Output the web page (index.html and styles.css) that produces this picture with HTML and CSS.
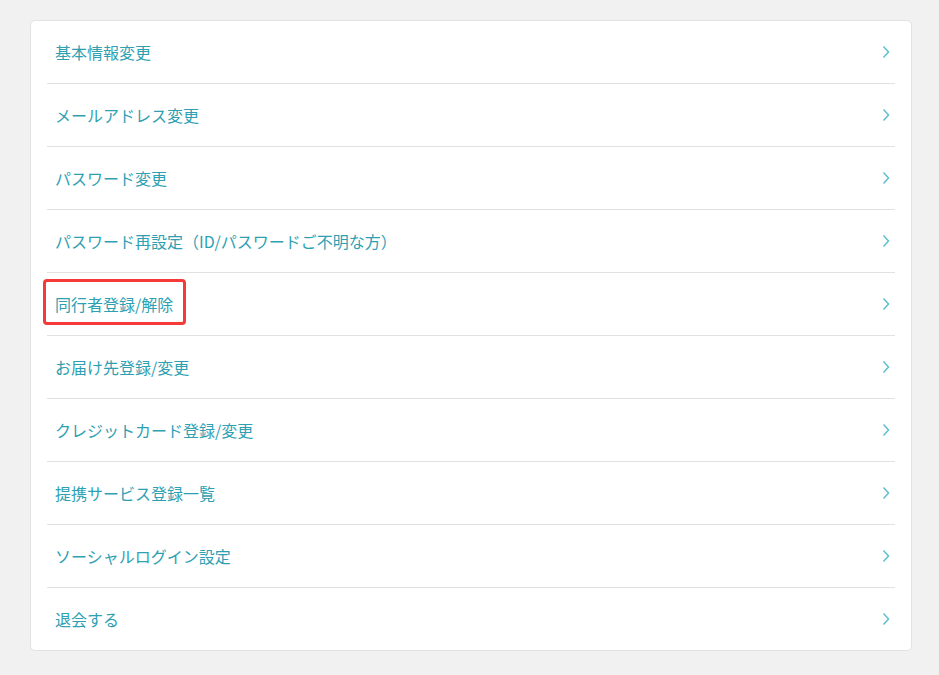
FILE: index.html
```html
<!DOCTYPE html>
<html lang="ja">
<head>
<meta charset="utf-8">
<title>設定</title>
<link rel="stylesheet" href="styles.css">
</head>
<body>
<div class="page">
  <ul class="menu">
    <li class="menu-item"><a class="menu-link" href="#"><span class="label">基本情報変更</span><svg class="chev" viewBox="0 0 8 14" width="8" height="14"><path d="M1.5 1.5 L6.5 7 L1.5 12.5"/></svg></a></li>
    <li class="menu-item"><a class="menu-link" href="#"><span class="label">メールアドレス変更</span><svg class="chev" viewBox="0 0 8 14" width="8" height="14"><path d="M1.5 1.5 L6.5 7 L1.5 12.5"/></svg></a></li>
    <li class="menu-item"><a class="menu-link" href="#"><span class="label">パスワード変更</span><svg class="chev" viewBox="0 0 8 14" width="8" height="14"><path d="M1.5 1.5 L6.5 7 L1.5 12.5"/></svg></a></li>
    <li class="menu-item"><a class="menu-link" href="#"><span class="label">パスワード再設定（ID/パスワードご不明な方）</span><svg class="chev" viewBox="0 0 8 14" width="8" height="14"><path d="M1.5 1.5 L6.5 7 L1.5 12.5"/></svg></a></li>
    <li class="menu-item"><a class="menu-link" href="#"><span class="label highlight">同行者登録/解除</span><svg class="chev" viewBox="0 0 8 14" width="8" height="14"><path d="M1.5 1.5 L6.5 7 L1.5 12.5"/></svg></a></li>
    <li class="menu-item"><a class="menu-link" href="#"><span class="label">お届け先登録/変更</span><svg class="chev" viewBox="0 0 8 14" width="8" height="14"><path d="M1.5 1.5 L6.5 7 L1.5 12.5"/></svg></a></li>
    <li class="menu-item"><a class="menu-link" href="#"><span class="label">クレジットカード登録/変更</span><svg class="chev" viewBox="0 0 8 14" width="8" height="14"><path d="M1.5 1.5 L6.5 7 L1.5 12.5"/></svg></a></li>
    <li class="menu-item"><a class="menu-link" href="#"><span class="label">提携サービス登録一覧</span><svg class="chev" viewBox="0 0 8 14" width="8" height="14"><path d="M1.5 1.5 L6.5 7 L1.5 12.5"/></svg></a></li>
    <li class="menu-item"><a class="menu-link" href="#"><span class="label">ソーシャルログイン設定</span><svg class="chev" viewBox="0 0 8 14" width="8" height="14"><path d="M1.5 1.5 L6.5 7 L1.5 12.5"/></svg></a></li>
    <li class="menu-item"><a class="menu-link" href="#"><span class="label">退会する</span><svg class="chev" viewBox="0 0 8 14" width="8" height="14"><path d="M1.5 1.5 L6.5 7 L1.5 12.5"/></svg></a></li>
  </ul>
</div>
</body>
</html>
```
FILE: styles.css
```css
html, body {
  margin: 0;
  padding: 0;
  background: #f1f1f1;
}
body {
  font-family: "Noto Sans CJK JP", "Noto Sans", sans-serif;
}
.page {
  padding: 20px 28px 24px 30px;
}
.menu {
  list-style: none;
  margin: 0;
  padding: 0 16px;
  background: #fff;
  border: 1px solid #e2e2e2;
  border-radius: 5px;
  width: 848px;
}
.menu-item {
  border-bottom: 1px solid #e1e1e1;
}
.menu-item:last-child {
  border-bottom: none;
}
.menu-link {
  display: flex;
  align-items: center;
  justify-content: space-between;
  height: 62px;
  padding: 0 5px 0 8px;
  color: #2f9fb2;
  text-decoration: none;
  font-size: 16px;
  line-height: 24px;
}
.label {
  position: relative;
}
.highlight::after {
  content: "";
  position: absolute;
  left: -12px;
  right: -13px;
  top: -13px;
  bottom: -9px;
  border: 3px solid #f53a3a;
  border-radius: 4px;
}
.chev {
  fill: none;
  stroke: #5dbfcd;
  stroke-width: 1.5;
}
```
